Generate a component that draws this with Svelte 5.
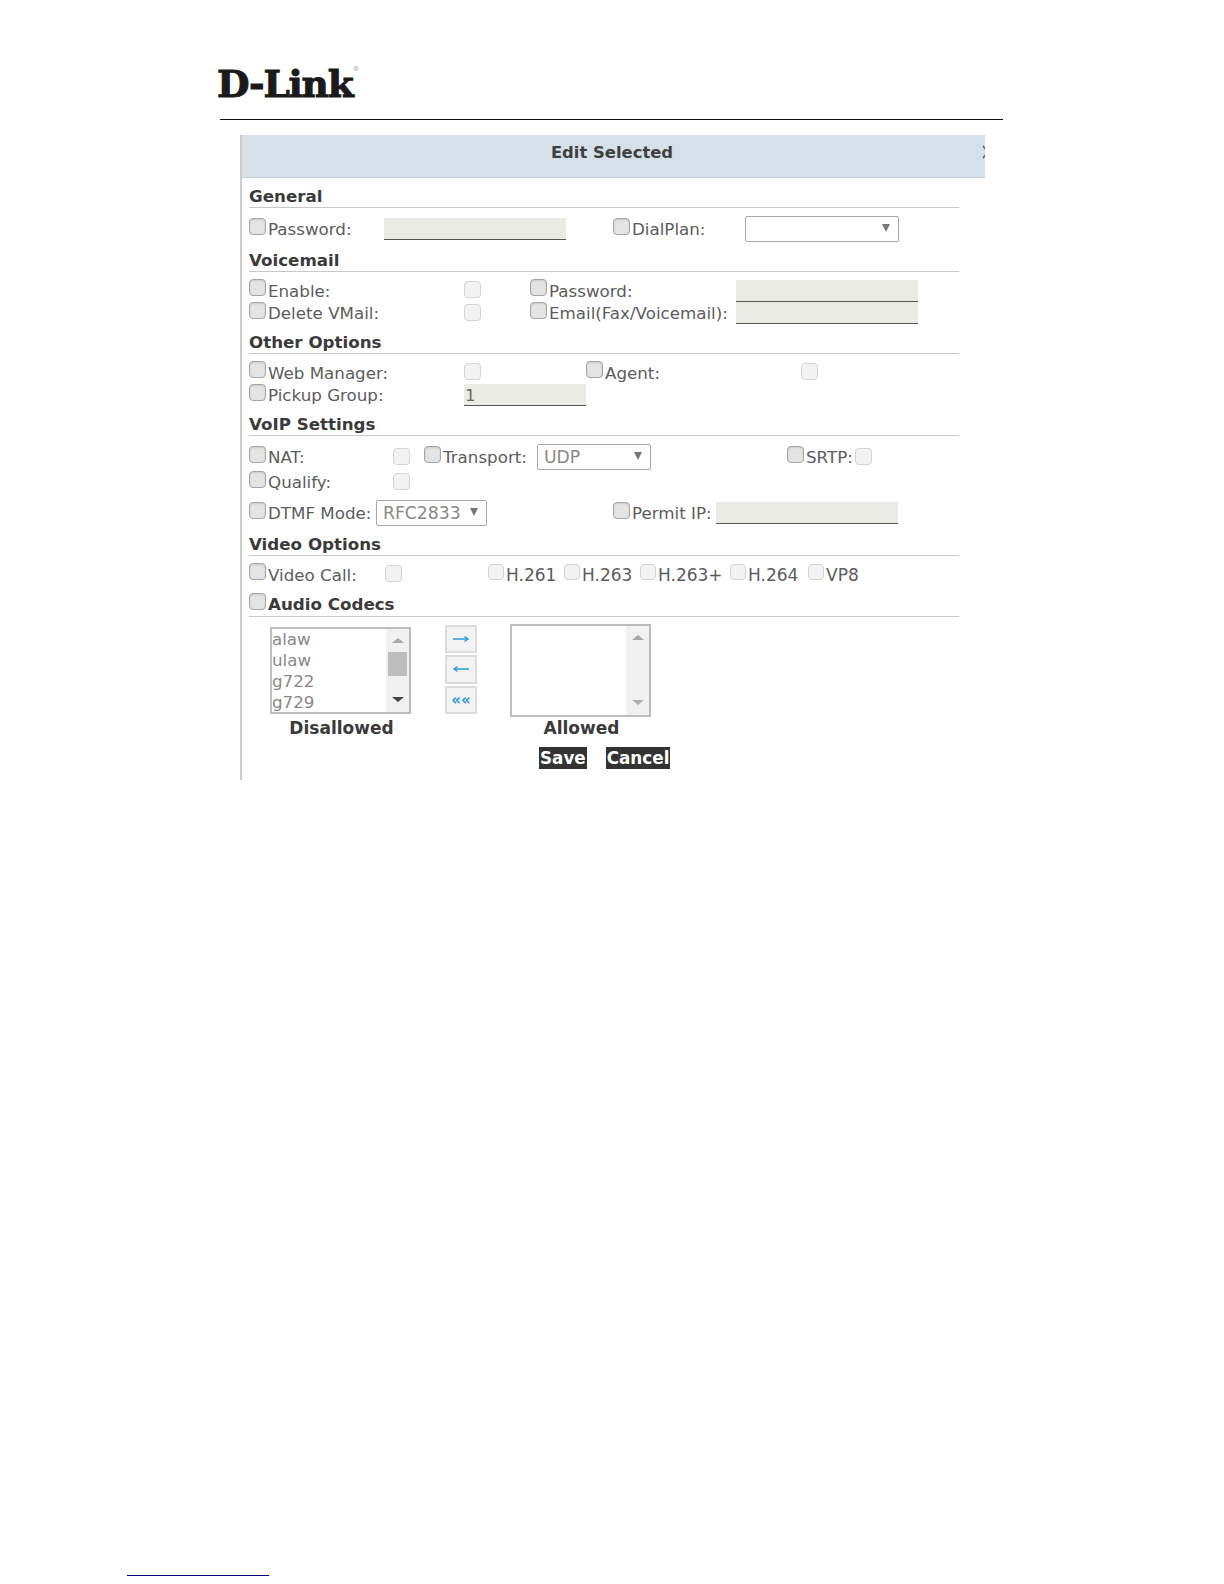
<script>
  const videoCodecs = ["H.261", "H.263", "H.263+", "H.264", "VP8"];
  const disallowed = ["alaw", "ulaw", "g722", "g729"];
</script>

<div class="page">
  <header class="brand">
    <div class="logo">D-Link<sup>®</sup></div>
  </header>

  <section class="dialog">
    <div class="dialog-head">
      <span class="title">Edit Selected</span>
      <svg class="close" width="12" height="14" viewBox="0 0 12 14" aria-label="Close">
        <path d="M1 1l10 12M11 1L1 13" fill="none" stroke="#555" stroke-width="1.4" />
      </svg>
    </div>

    <div class="dialog-body">
      <h3>General</h3>
      <div class="row general">
        <label class="field"><input type="checkbox" />Password:</label>
        <input class="text wide" disabled />
        <label class="field"><input type="checkbox" />DialPlan:</label>
        <div class="select dialplan"></div>
      </div>

      <h3>Voicemail</h3>
      <div class="row voicemail first">
        <label class="field"><input type="checkbox" />Enable:</label>
        <input class="off" type="checkbox" disabled />
        <label class="field"><input type="checkbox" />Password:</label>
        <input class="text wide" disabled />
      </div>
      <div class="row voicemail">
        <label class="field"><input type="checkbox" />Delete VMail:</label>
        <input class="off" type="checkbox" disabled />
        <label class="field"><input type="checkbox" />Email(Fax/Voicemail):</label>
        <input class="text wide" disabled />
      </div>

      <h3>Other Options</h3>
      <div class="row other first">
        <label class="field"><input type="checkbox" />Web Manager:</label>
        <input class="off" type="checkbox" disabled />
        <label class="field"><input type="checkbox" />Agent:</label>
        <input class="off" type="checkbox" disabled />
      </div>
      <div class="row other">
        <label class="field"><input type="checkbox" />Pickup Group:</label>
        <input class="text pickup" value="1" disabled />
      </div>

      <h3>VoIP Settings</h3>
      <div class="row voip nat">
        <label class="field"><input type="checkbox" />NAT:</label>
        <input class="off" type="checkbox" disabled />
        <label class="field"><input type="checkbox" />Transport:</label>
        <div class="select transport">UDP</div>
        <label class="field"><input type="checkbox" />SRTP:</label>
        <input class="off" type="checkbox" disabled />
      </div>
      <div class="row voip qualify">
        <label class="field"><input type="checkbox" />Qualify:</label>
        <input class="off" type="checkbox" disabled />
      </div>
      <div class="row dtmf">
        <label class="field"><input type="checkbox" />DTMF Mode:</label>
        <div class="select mode">RFC2833</div>
        <label class="field"><input type="checkbox" />Permit IP:</label>
        <input class="text wide" disabled />
      </div>

      <h3>Video Options</h3>
      <div class="row video">
        <label class="field"><input type="checkbox" />Video Call:</label>
        <input class="off" type="checkbox" disabled />
        <div class="codecs">
          {#each videoCodecs as codec}
            <label class="field codec"><input class="off" type="checkbox" disabled />{codec}</label>
          {/each}
        </div>
      </div>

      <h3 class="audio"><input type="checkbox" />Audio Codecs</h3>
      <div class="transfer">
        <div class="col-list left">
          <div class="listbox short">
            <div class="options">
              {#each disallowed as opt}
                <div>{opt}</div>
              {/each}
            </div>
            <div class="scroll">
              <span class="tri up"></span>
              <span class="thumb"></span>
              <span class="tri down dark"></span>
            </div>
          </div>
          <div class="list-label">Disallowed</div>
        </div>

        <div class="movers">
          <button aria-label="Add">
            <svg width="18" height="10" viewBox="0 0 18 10"><path d="M1 5h15M12.5 2.5L16 5l-3.5 2.5" fill="none" stroke="#2a9dd8" stroke-width="1.5" /></svg>
          </button>
          <button aria-label="Remove">
            <svg width="18" height="10" viewBox="0 0 18 10"><path d="M17 5H2M5.5 2.5L2 5l3.5 2.5" fill="none" stroke="#2a9dd8" stroke-width="1.5" /></svg>
          </button>
          <button class="all">««</button>
        </div>

        <div class="col-list right">
          <div class="listbox tall">
            <div class="options"></div>
            <div class="scroll idle">
              <span class="tri up"></span>
              <span class="tri down"></span>
            </div>
          </div>
          <div class="list-label">Allowed</div>
        </div>
      </div>

      <div class="actions">
        <button class="dark-btn">Save</button>
        <button class="dark-btn">Cancel</button>
      </div>
    </div>
  </section>

  <div class="footer-link"></div>
</div>

<style>
  :global(body) { margin: 0; background: #fff; }

  .page {
    width: 1224px;
    height: 1584px;
    box-sizing: border-box;
    padding-top: 59px;
    display: flex;
    flex-direction: column;
    font-family: "DejaVu Sans", sans-serif;
    font-size: 16.7px;
    color: #5c5c5c;
    overflow: hidden;
  }

  .brand {
    margin-left: 220px;
    width: 783px;
    height: 61px;
    box-sizing: border-box;
    border-bottom: 1.5px solid #111;
  }
  .logo {
    margin-left: -3px;
    font-family: "DejaVu Serif", serif;
    font-weight: 700;
    font-size: 37.5px;
    letter-spacing: -1.2px;
    line-height: 51px;
    color: #1a1a1a;
    -webkit-text-stroke: 1px #1a1a1a;
    white-space: nowrap;
  }
  .logo sup {
    font-size: 7px;
    color: #bbb;
    -webkit-text-stroke: 0;
    vertical-align: 26px;
    line-height: 0;
  }

  .dialog {
    margin: 15px 0 0 240px;
    width: 745px;
    height: 645px;
    box-sizing: border-box;
    border-left: 2px solid #ccc;
  }
  .dialog-head {
    position: relative;
    height: 43px;
    background: #d5e0e9;
    border-bottom: 1px solid #c5ccd2;
    box-sizing: border-box;
    display: flex;
    align-items: center;
    justify-content: center;
    padding-bottom: 8px;
    overflow: hidden;
  }
  .title { font-weight: 700; font-size: 16.4px; color: #3f3f3f; margin-right: 3px; }
  .close {
    position: absolute;
    right: -9px;
    top: 10px;
  }

  .dialog-body { padding-left: 7px; width: 710px; }

  h3 {
    margin: 0;
    height: 20px;
    padding-top: 9px;
    line-height: 18px;
    font-size: 16.7px;
    font-weight: 700;
    color: #3a3a3a;
    border-bottom: 1px solid #c8c8c8;
  }

  .row {
    display: grid;
    align-items: center;
    height: 22.5px;
  }
  .general { grid-template-columns: 135px 229px 132px 1fr; height: 26px; margin: 8px 0 0; }
  .voicemail { grid-template-columns: 215px 66px 206px 1fr; }
  .other { grid-template-columns: 215px 122px 215px 1fr; }
  .voip { grid-template-columns: 144px 31px 113px 250px 68px 1fr; }
  .first { margin-top: 7px; }
  .nat { height: 26px; margin-top: 8px; }
  .qualify { height: 24px; }
  .dtmf { grid-template-columns: 127px 237px 103px 1fr; height: 26px; margin: 6px 0 0; }
  .video { grid-template-columns: 136px 103px 1fr; height: 23px; margin-top: 7px; }

  .field {
    display: flex;
    align-items: center;
    white-space: nowrap;
    line-height: 18px;
  }

  input[type="checkbox"] {
    appearance: none;
    margin: 0 2px 6px 0;
    width: 17px;
    height: 17px;
    flex: none;
    box-sizing: border-box;
    border: 1px solid #a5a5a5;
    border-radius: 4px;
    background: #e4e4e4;
    box-shadow: inset 0 1px 2px rgba(0, 0, 0, 0.12);
  }
  input.off {
    margin: 0 0 2px;
    background: #f2f2f2;
    border-color: #d4d4d4;
    box-shadow: none;
  }
  .codec { font-size: 17px; }
  .codec input.off { width: 16px; height: 16px; margin: 0 2px 5px 0; }

  .text {
    box-sizing: border-box;
    height: 22px;
    margin: 0;
    padding: 0 1px;
    border: 0;
    border-bottom: 1.5px solid #555;
    background: #ebebe6;
    font: inherit;
    color: #6a6a6a;
  }
  .wide { width: 182px; }
  .pickup { width: 122px; }

  .select {
    position: relative;
    box-sizing: border-box;
    height: 26px;
    padding-left: 6px;
    border: 1px solid #a8a8a8;
    border-radius: 2px;
    font-size: 17.2px;
    line-height: 24px;
    color: #888;
    background: #fff;
  }
  .select::after {
    content: "";
    position: absolute;
    right: 8px;
    top: 7px;
    border-left: 4px solid transparent;
    border-right: 4px solid transparent;
    border-top: 8px solid #777;
  }
  .dialplan { width: 154px; }
  .transport { width: 114px; }
  .mode { width: 111px; }

  .codecs { display: flex; }
  .codec:nth-child(1), .codec:nth-child(2) { width: 76px; }
  .codec:nth-child(3) { width: 90px; }
  .codec:nth-child(4) { width: 78px; }

  .audio {
    display: flex;
    align-items: center;
    height: 24px;
    padding-top: 0;
    margin-top: 6px;
  }

  .transfer {
    display: grid;
    grid-template-columns: 175px 65px 1fr;
    margin: 7px 0 0 21px;
    align-items: start;
  }
  .col-list { width: 141px; }
  .left { padding-top: 3px; }

  .listbox {
    display: flex;
    box-sizing: border-box;
    width: 141px;
    border: 2px solid #bdbdbd;
    background: #fff;
    overflow: hidden;
  }
  .short { height: 87px; }
  .tall { height: 93px; }
  .options {
    flex: 1;
    font-size: 16.7px;
    line-height: 21px;
    color: #888;
  }
  .scroll {
    position: relative;
    width: 23px;
    background: #f1f1f1;
  }
  .thumb {
    position: absolute;
    left: 2px;
    top: 23px;
    width: 19px;
    height: 24px;
    background: #bdbdbd;
  }
  .tri {
    position: absolute;
    left: 6px;
    border-left: 6px solid transparent;
    border-right: 6px solid transparent;
  }
  .up { top: 9px; border-bottom: 5px solid #a8a8a8; }
  .down { bottom: 10px; border-top: 5px solid #b0b0b0; }
  .down.dark { border-top-color: #444; }

  .list-label {
    margin-top: 4px;
    padding-left: 2px;
    text-align: center;
    font-weight: 700;
    font-size: 17px;
    line-height: 21px;
    color: #3a3a3a;
  }
  .right .list-label { margin-top: 1px; }

  .movers {
    display: flex;
    flex-direction: column;
    gap: 2px;
    width: 32px;
    margin-top: 1px;
  }
  .movers button {
    display: flex;
    align-items: center;
    justify-content: center;
    height: 28.3px;
    padding: 0;
    border: 2px solid #dcdcdc;
    background: #f3f3f3;
    color: #2a9dd8;
    font: 700 15px "DejaVu Sans", sans-serif;
  }

  .actions {
    display: flex;
    gap: 19px;
    margin: 8px 0 0 290px;
  }
  .dark-btn {
    height: 22px;
    padding: 0 1px;
    border: 0;
    background: #333;
    color: #fff;
    font: 700 16.8px/22px "DejaVu Sans", sans-serif;
  }

  .footer-link {
    margin: auto 0 8px 127px;
    width: 142px;
    height: 1.5px;
    background: #000080;
  }
</style>
